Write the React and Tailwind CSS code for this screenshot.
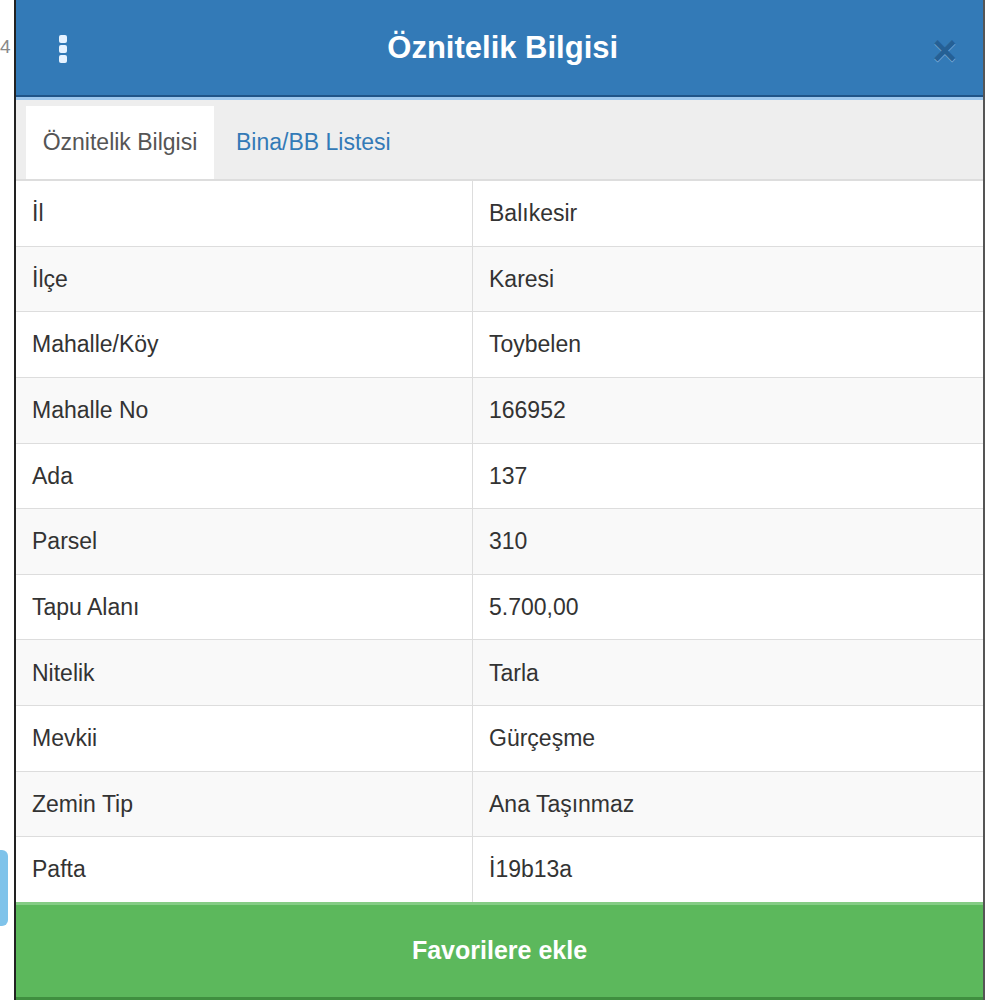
import React from "react";

const rows = [
  ["İl", "Balıkesir"],
  ["İlçe", "Karesi"],
  ["Mahalle/Köy", "Toybelen"],
  ["Mahalle No", "166952"],
  ["Ada", "137"],
  ["Parsel", "310"],
  ["Tapu Alanı", "5.700,00"],
  ["Nitelik", "Tarla"],
  ["Mevkii", "Gürçeşme"],
  ["Zemin Tip", "Ana Taşınmaz"],
  ["Pafta", "İ19b13a"],
];

export default function App() {
  return (
    <div
      className="relative w-[1000px] h-[1000px] bg-white overflow-hidden"
      style={{ fontFamily: '"Liberation Sans", Arial, sans-serif' }}
    >
      <div className="absolute left-0 top-[37px] text-[19px] text-[#888] leading-none">4</div>
      <div className="absolute left-[-6px] top-[850px] w-[14px] h-[76px] rounded-[6px] bg-[#7fc3ea]" />

      <div className="relative ml-[14px] w-[971px] h-[1000px] flex flex-col border-l-2 border-r-2 border-l-[#222] border-r-[#555] bg-white">
        {/* Header */}
        <div className="h-[100px] shrink-0 flex flex-col">
          <div className="h-[95px] bg-[#337ab7] flex items-center px-[40px] relative">
            <div className="flex flex-col gap-[2px] ml-[3px] mt-[2px]">
              <span className="block w-[8px] h-[8px] rounded-[2px] bg-[#e6f2ff]" />
              <span className="block w-[8px] h-[8px] rounded-[2px] bg-[#e6f2ff]" />
              <span className="block w-[8px] h-[8px] rounded-[2px] bg-[#e6f2ff]" />
            </div>
            <div className="flex-1 text-center text-white font-bold text-[31px] leading-none pl-[6px]">
              Öznitelik Bilgisi
            </div>
            <div className="text-[42px] font-bold leading-none text-[#1d4f80] opacity-60 [text-shadow:0_1px_0_#a8ccee] mr-[-14px] mt-[6px]">
              ×
            </div>
          </div>
          <div className="h-[2px] bg-[#1f5488]" />
          <div className="h-[3px] bg-[#9cc6ec]" />
        </div>

        {/* Tabs */}
        <div className="h-[80px] shrink-0 bg-[#eeeeee] border-b border-[#dddddd] flex items-end pl-[10px]">
          <div className="h-[73px] w-[188px] bg-white flex items-center justify-center text-[23px] text-[#555]">
            Öznitelik Bilgisi
          </div>
          <div className="h-[73px] flex items-center pl-[22px] text-[23px] text-[#337ab7]">
            Bina/BB Listesi
          </div>
        </div>

        {/* Table */}
        <div className="flex-1 flex flex-col">
          {rows.map(([k, v], i) => (
            <div
              key={k}
              className={
                "flex-1 flex border-t border-[#dddddd] text-[23px] text-[#333] " +
                (i % 2 === 1 ? "bg-[#f9f9f9]" : "bg-white")
              }
            >
              <div className="w-[457px] flex items-center pl-[16px] border-r border-[#dddddd]">{k}</div>
              <div className="flex-1 flex items-center pl-[16px]">{v}</div>
            </div>
          ))}
        </div>

        {/* Button */}
        <div className="h-[98px] shrink-0 bg-[#5cb85c] border-t-[3px] border-t-[#85cc85] border-b-[3px] border-b-[#3f8f3f] flex items-center justify-center text-white font-bold text-[25px]">
          Favorilere ekle
        </div>
      </div>
    </div>
  );
}
